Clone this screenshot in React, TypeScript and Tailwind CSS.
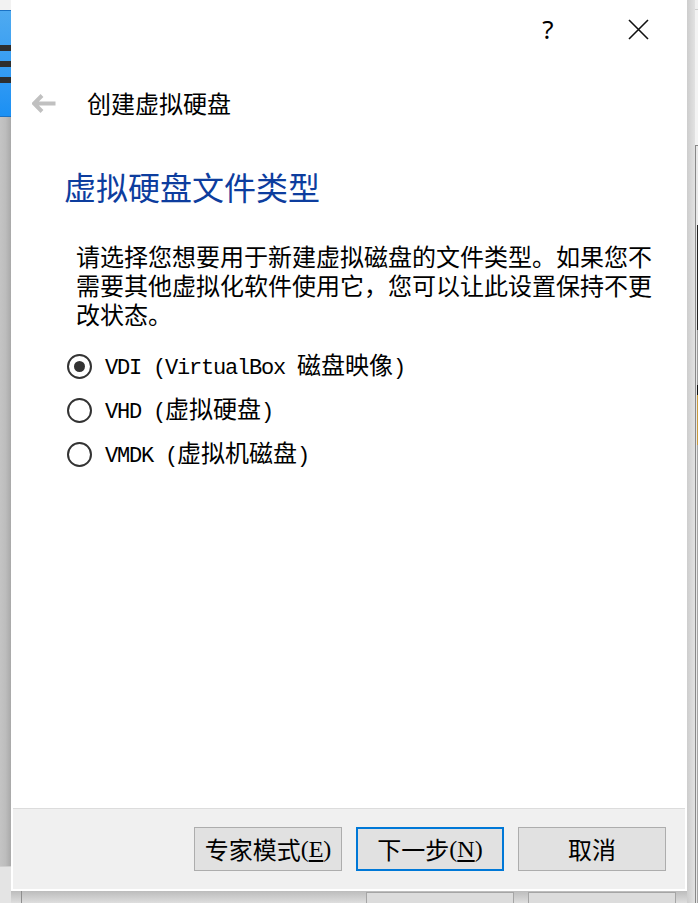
import React from 'react';

const cjk = "font-['Noto_Sans_CJK_SC',sans-serif]";

// latin runs in the labels are monospaced, half the width of a CJK glyph
const Mono = ({ children }: { children: React.ReactNode }) => (
  <span className="font-['Liberation_Mono',monospace] text-[22px] tracking-[-1.2px] whitespace-pre">
    {children}
  </span>
);

const Radio = ({ checked, children }: { checked?: boolean; children: React.ReactNode }) => (
  <div className="flex items-center h-[44px]">
    <div className="ml-[2px] w-[25px] h-[25px] rounded-full border-[2.5px] border-[#333] bg-white flex items-center justify-center">
      {checked && <div className="w-[11px] h-[11px] rounded-full bg-[#333]" />}
    </div>
    <div className={`ml-[13px] text-[24px] text-black leading-[30px] ${cjk}`}>{children}</div>
  </div>
);

const WizButton = ({
  children,
  focused,
}: {
  children: React.ReactNode;
  focused?: boolean;
}) => (
  <button
    className={
      'w-[148px] h-[44px] flex items-center justify-center bg-[#e1e1e1] text-[24px] text-black ' +
      cjk +
      (focused ? ' border-2 border-[#0078d7]' : ' border border-[#adadad]')
    }
  >
    {children}
  </button>
);

const Key = ({ k }: { k: string }) => (
  <span className="font-['Liberation_Serif',serif] text-[24px]">
    (<span className="underline underline-offset-[3px]">{k}</span>)
  </span>
);

export default function App() {
  return (
    <div className="relative w-[698px] h-[903px] overflow-hidden bg-[#dedede]">
      {/* desktop behind the dialog: left side */}
      <div className="absolute left-0 top-0 w-[11px] h-[10px] bg-[#f2f2f2]" />
      <div className="absolute left-0 top-[10px] w-[11px] h-[107px] bg-gradient-to-b from-[#4eaaf0] to-[#1a90f4] border-y border-[#1b72c4] flex flex-col">
        <div className="mt-[34px] h-[6px] bg-[#2e2e2e]" />
        <div className="mt-[10px] h-[6px] bg-[#2e2e2e]" />
        <div className="mt-[10px] h-[6px] bg-[#2e2e2e]" />
      </div>
      <div className="absolute left-0 top-[117px] w-[11px] h-[749px] bg-gradient-to-r from-[#c4c4c4] via-[#bdbdbd] to-[#a9a9a9]" />
      <div className="absolute left-0 top-[866px] w-[11px] h-[37px] bg-[#e4e4e4] border-t border-[#cfcfcf]" />

      {/* right side */}
      <div className="absolute left-[687px] top-0 w-[8px] h-[903px] bg-gradient-to-r from-[#cdcdcd] to-[#e2e2e2]" />
      <div className="absolute left-[695px] top-0 w-[3px] h-[10px] bg-[#f0f0f0] border-b border-[#cfcfcf]" />
      <div className="absolute left-[695px] top-[10px] w-[3px] h-[135px] bg-[#f3f3f3]" />
      <div className="absolute left-[695px] top-[145px] w-[3px] h-[758px] bg-[#e9e9e9] border-l border-t border-[#888]" />
      <div className="absolute left-[697px] top-[225px] w-[1px] h-[105px] bg-[#222]" />
      <div className="absolute left-[697px] top-[330px] w-[1px] h-[55px] bg-[#9a9a9a]" />
      <div className="absolute left-[697px] top-[385px] w-[1px] h-[10px] bg-[#111]" />
      <div className="absolute left-[697px] top-[395px] w-[1px] h-[50px] bg-[#c99a3e]" />
      <div className="absolute left-[697px] top-[445px] w-[1px] h-[458px] bg-[#a5a5a5]" />

      {/* bottom: shadow and the buttons of the wizard underneath */}
      <div className="absolute left-[11px] top-[891px] w-[676px] h-[12px] bg-gradient-to-b from-[#bcbcbc] to-[#dedede]" />
      <div className="absolute left-[21px] top-[891px] w-[1px] h-[12px] bg-[#8e8e8e]" />
      <div className="absolute left-[366px] top-[892px] w-[148px] h-[20px] bg-[#dcdcdc] border border-[#a5a5a5]" />
      <div className="absolute left-[528px] top-[892px] w-[148px] h-[20px] bg-[#dcdcdc] border border-[#a5a5a5]" />

      {/* the wizard dialog */}
      <div className="absolute left-[11px] top-0 w-[676px] h-[891px] bg-white flex flex-col">
        {/* caption buttons */}
        <div className="h-[58px] flex justify-end pr-[4px]">
          <div className="w-[90px] h-[58px] flex items-center justify-center font-['Noto_Sans',sans-serif] text-[26px] text-black">
            ?
          </div>
          <div className="w-[90px] h-[58px] flex items-center justify-center">
            <svg width="21" height="21" viewBox="0 0 21 21">
              <path d="M1 1 L20 20 M20 1 L1 20" stroke="#111" strokeWidth="1.6" fill="none" />
            </svg>
          </div>
        </div>

        {/* back arrow and title */}
        <div className="mt-[28px] h-[34px] flex items-center">
          <svg className="ml-[21px]" width="24" height="19" viewBox="0 0 24 19">
            <path d="M10 1.5 L2 9.5 L10 17.5 M2.5 9.5 H23.5" stroke="#c0c0c0" strokeWidth="4" fill="none" />
          </svg>
          <div className={`ml-[31px] text-[24px] leading-[34px] text-black ${cjk}`}>创建虚拟硬盘</div>
        </div>

        {/* page content */}
        <div className="pl-[53px] flex flex-col">
          <div className={`mt-[46px] h-[40px] text-[32px] leading-[40px] text-[#0d3d9e] ${cjk}`}>
            虚拟硬盘文件类型
          </div>
          <p className={`mt-[35px] ml-[12px] w-[580px] text-[24px] leading-[29px] text-black ${cjk}`}>
            请选择您想要用于新建虚拟磁盘的文件类型。如果您不需要其他虚拟化软件使用它，您可以让此设置保持不更改状态。
          </p>
          <div className="mt-[16px] ml-[1px] flex flex-col">
            <Radio checked>
              <Mono>VDI (VirtualBox </Mono>磁盘映像<Mono>)</Mono>
            </Radio>
            <Radio>
              <Mono>VHD (</Mono>虚拟硬盘<Mono>)</Mono>
            </Radio>
            <Radio>
              <Mono>VMDK (</Mono>虚拟机磁盘<Mono>)</Mono>
            </Radio>
          </div>
        </div>

        <div className="flex-1" />

        {/* button bar */}
        <div className="mx-[2px] mb-[2px] h-[81px] border-t border-[#dcdcdc] bg-[#f0f0f0] flex items-center justify-end gap-[14px] pr-[19px]">
          <WizButton>
            专家模式<Key k="E" />
          </WizButton>
          <WizButton focused>
            下一步<Key k="N" />
          </WizButton>
          <WizButton>取消</WizButton>
        </div>
      </div>
    </div>
  );
}
